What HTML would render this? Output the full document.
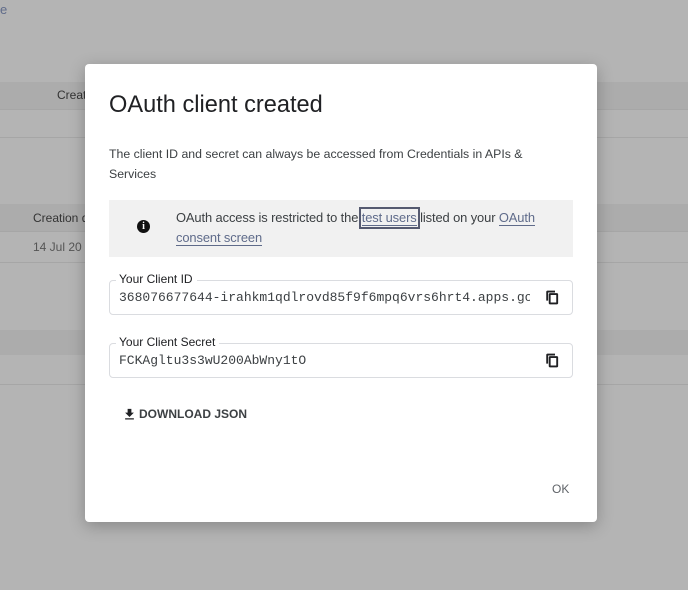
<!DOCTYPE html>
<html><head><style>
body{margin:0;width:688px;height:590px;background:#b4b4b4;position:relative;overflow:hidden;font-family:"Liberation Sans",sans-serif;}
.band{position:absolute;left:0;width:688px;background:#acacac;}
.line{position:absolute;left:0;width:688px;height:1px;background:#a6a6a6;}
.bg{position:absolute;font-size:12px;color:#333;}
.dlg{position:absolute;left:85px;top:64px;width:512px;height:458px;background:#fff;border-radius:4px;box-shadow:0 4px 16px rgba(0,0,0,.25);}
.t{position:absolute;left:24px;top:28px;font-size:23.6px;color:#202124;}
.p{position:absolute;left:24px;top:80px;width:430px;font-size:12.3px;line-height:20px;color:#3c4043;}
.info{position:absolute;left:24px;top:136px;width:464px;height:57px;background:#f1f1f1;}
.info .txt{position:absolute;left:67px;top:8px;width:395px;font-size:12.9px;line-height:20px;color:#3c4043;letter-spacing:-0.1px}
.u{color:#5f6b8a;border-bottom:1px solid #5f6b8a;}
.ic{position:absolute;left:28px;top:20px;width:13px;height:13px;border-radius:50%;background:#111;color:#fff;font-size:10px;font-weight:bold;text-align:center;line-height:13px;font-family:"Liberation Serif",serif;}
.fld{position:absolute;left:24px;width:462px;height:33px;border:1px solid #dadce0;border-radius:4px;}
.fld .lb{position:absolute;left:6px;top:-9px;background:#fff;padding:0 4px 0 3px;font-size:12px;color:#202124;}
.fld .v{position:absolute;left:9px;top:9px;font-family:"Liberation Mono",monospace;font-size:13px;color:#3c4043;white-space:nowrap;width:411px;overflow:hidden;}
.cp{position:absolute;right:12px;top:9px;}
.dl{position:absolute;left:54px;top:343px;font-size:12px;font-weight:bold;color:#3c4043;}
.ok{position:absolute;left:467px;top:418px;font-size:12px;color:#5f6368;}
</style></head><body>
<div class="bg" style="left:0;top:2px;color:#5f6b8a;font-size:13px">e</div>
<div class="band" style="top:82px;height:27px"></div>
<div class="line" style="top:109px"></div>
<div class="line" style="top:137px"></div>
<div class="band" style="top:204px;height:27px"></div>
<div class="line" style="top:231px"></div>
<div class="line" style="top:262px"></div>
<div class="band" style="top:330px;height:25px"></div>
<div class="line" style="top:384px"></div>
<div class="bg" style="left:57px;top:88px">Creat</div>
<div class="bg" style="left:33px;top:211px">Creation d</div>
<div class="bg" style="left:33px;top:240px;color:#555">14 Jul 20</div>
<div class="dlg">
<div class="t">OAuth client created</div>
<div class="p">The client ID and secret can always be accessed from Credentials in APIs &amp; Services</div>
<div class="info"><div class="ic">i</div><div class="txt">OAuth access is restricted to the <span class="u" style="outline:2px solid #555a70;outline-offset:1px">test users</span> listed on your <span class="u">OAuth consent screen</span></div></div>
<div class="fld" style="top:216px"><span class="lb">Your Client ID</span><div class="v">368076677644-irahkm1qdlrovd85f9f6mpq6vrs6hrt4.apps.googleusercontent.com</div>
<svg class="cp" width="15" height="15" viewBox="0 0 24 24"><path d="M16 1H4c-1.1 0-2 .9-2 2v14h3V4h11V1zm3 4H8c-1.1 0-2 .9-2 2v14c0 1.1.9 2 2 2h11c1.1 0 2-.9 2-2V7c0-1.1-.9-2-2-2zm-1 15H9V8h9v12z" fill="#202124"/></svg></div>
<div class="fld" style="top:279px"><span class="lb">Your Client Secret</span><div class="v">FCKAgltu3s3wU200AbWny1tO</div>
<svg class="cp" width="15" height="15" viewBox="0 0 24 24"><path d="M16 1H4c-1.1 0-2 .9-2 2v14h3V4h11V1zm3 4H8c-1.1 0-2 .9-2 2v14c0 1.1.9 2 2 2h11c1.1 0 2-.9 2-2V7c0-1.1-.9-2-2-2zm-1 15H9V8h9v12z" fill="#202124"/></svg></div>
<svg style="position:absolute;left:37px;top:342px" width="15" height="17" viewBox="0 0 24 24"><path d="M19 9h-4V3H9v6H5l7 7 7-7zM5 18v2h14v-2H5z" fill="#202124"/></svg>
<div class="dl">DOWNLOAD JSON</div>
<div class="ok">OK</div>
</div>
</body></html>
